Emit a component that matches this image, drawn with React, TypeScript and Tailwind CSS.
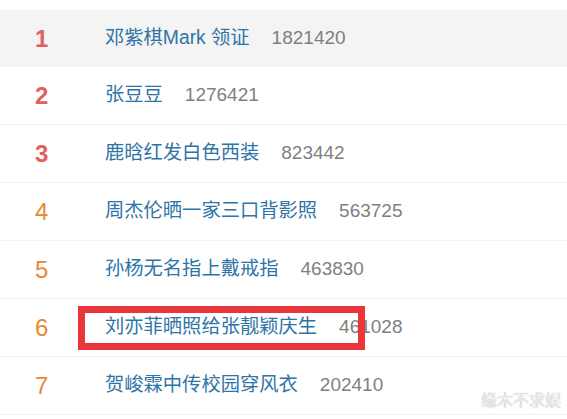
import React from 'react';

interface HotItem {
  rank: number;
  title: string;
  count: string;
}

const items: HotItem[] = [
  { rank: 1, title: '邓紫棋Mark 领证', count: '1821420' },
  { rank: 2, title: '张豆豆', count: '1276421' },
  { rank: 3, title: '鹿晗红发白色西装', count: '823442' },
  { rank: 4, title: '周杰伦晒一家三口背影照', count: '563725' },
  { rank: 5, title: '孙杨无名指上戴戒指', count: '463830' },
  { rank: 6, title: '刘亦菲晒照给张靓颖庆生', count: '461028' },
  { rank: 7, title: '贺峻霖中传校园穿风衣', count: '202410' },
];

const HotRow: React.FC<{ item: HotItem }> = ({ item }) => {
  const top = item.rank <= 3;
  return (
    <div
      className={
        item.rank === 1
          ? 'relative flex items-center h-[57px] bg-[#f4f4f4]'
          : 'relative flex items-center h-[58px] border-b border-[#f1f1f1]'
      }
    >
      <span
        className={
          top
            ? 'w-[105px] pl-[35px] text-[24px] font-bold text-[#e3605e]'
            : 'w-[105px] pl-[35px] text-[24px] text-[#e8892f]'
        }
      >
        {item.rank}
      </span>
      <span className="text-[19.3px] text-[#2f74a6]">{item.title}</span>
      <span className="ml-[22px] text-[19px] text-[#7f7f7f]">{item.count}</span>
      {item.rank === 6 && (
        <div className="absolute left-[78px] top-[7px] w-[287px] h-[44px] border-[7px] border-[#e8363a]" />
      )}
    </div>
  );
};

export default function App() {
  return (
    <div
      className="relative w-[567px] h-[419px] overflow-hidden bg-white pt-[10px]"
      style={{ fontFamily: '"Liberation Sans", "Noto Sans CJK SC", sans-serif' }}
    >
      {items.map((item) => (
        <HotRow key={item.rank} item={item} />
      ))}
      <span className="absolute right-[6px] bottom-[10px] text-[16px] leading-none text-[#f4f4f4] [text-shadow:0_0_1px_#8a8a8a]">
        缘木不求娱
      </span>
    </div>
  );
}
